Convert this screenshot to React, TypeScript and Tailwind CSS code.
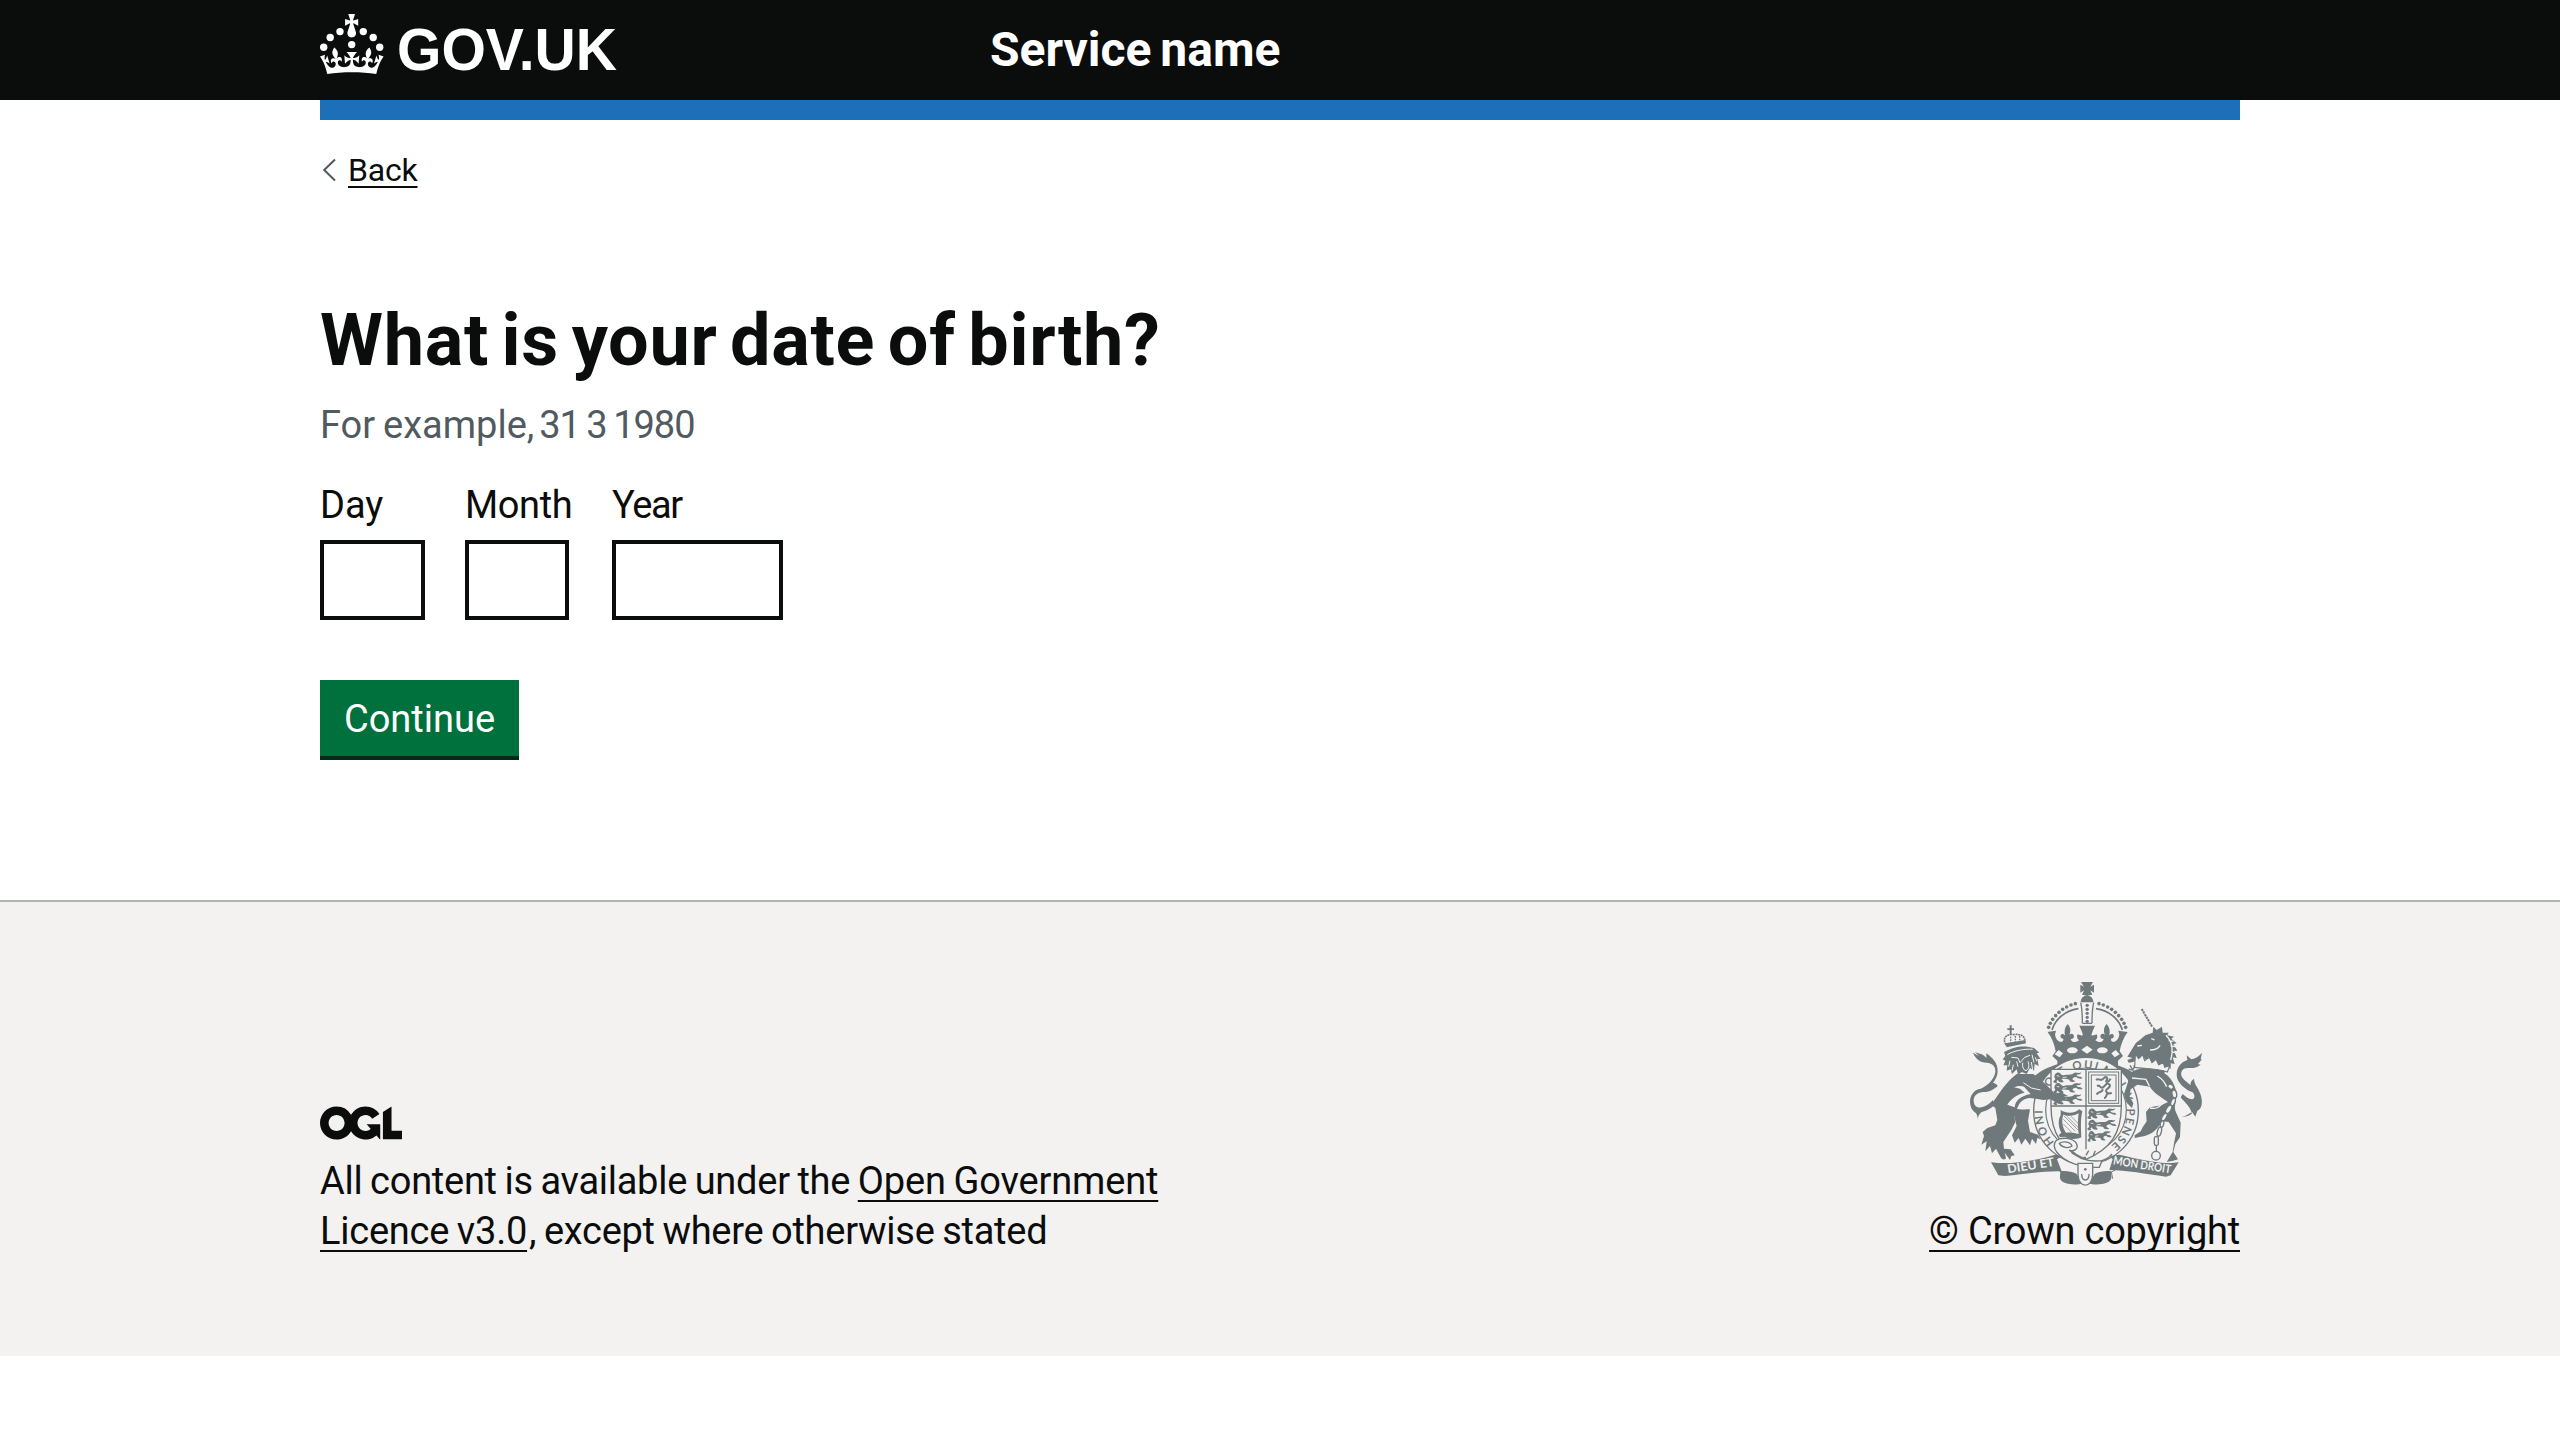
import type { ReactNode } from 'react';

function Crown() {
  return (
    <svg viewBox="0 0 64 60" className="mt-3.5 h-[60px] w-16 shrink-0 fill-current" aria-hidden="true">
      <circle cx="20" cy="17.6" r="3.7" />
      <circle cx="10.2" cy="23.5" r="3.7" />
      <circle cx="3.7" cy="33.2" r="3.7" />
      <circle cx="31.7" cy="30.6" r="3.7" />
      <circle cx="43.3" cy="17.6" r="3.7" />
      <circle cx="53.2" cy="23.5" r="3.7" />
      <circle cx="59.7" cy="33.2" r="3.7" />
      <path d="M33.1,9.8c.2-.1.3-.3.5-.5l4.6,2.4v-6.8l-4.6,1.5c-.1-.2-.3-.3-.5-.5l1.9-5.9h-6.7l1.9,5.9c-.2.1-.3.3-.5.5l-4.6-1.5v6.8l4.6-2.4c.1.2.3.3.5.5l-2.6,8c-.9,2.8,1.2,5.7,4.1,5.7h0c3,0,5.1-2.9,4.1-5.7l-2.6-8ZM37,37.9s-3.4,3.8-4.1,6.1c2.2,0,4.2-.5,6.4-2.8l-.7,8.5c-2-2.8-4.4-4.1-5.7-3.8.1,3.1.5,6.7,5.8,7.2,3.7.3,6.7-1.5,7-3.8.4-2.6-2-4.3-3.7-1.6-1.4-4.5,2.4-6.1,4.9-3.2-1.9-4.5-1.8-7.7,2.4-10.9,3,4,2.6,7.3-1.2,11.1,2.4-1.3,6.2,0,4,4.6-1.2-2.8-3.7-2.2-4.2.2-.3,1.7.7,3.7,3,4.2,1.9.3,4.7-.9,7-5.9-1.3,0-2.4.7-3.9,1.7l2.4-8c.6,2.3,1.4,3.7,2.2,4.5.6-1.6.5-2.8,0-5.3l5,1.8c-2.6,3.6-5.2,8.7-7.3,17.5-7.4-1.1-15.7-1.7-24.5-1.7h0c-8.8,0-17.1.6-24.5,1.7-2.1-8.9-4.7-13.9-7.3-17.5l5-1.8c-.5,2.5-.6,3.7,0,5.3.8-.8,1.6-2.3,2.2-4.5l2.4,8c-1.5-1-2.6-1.7-3.9-1.7,2.3,5,5.2,6.2,7,5.9,2.3-.4,3.3-2.4,3-4.2-.5-2.4-3-3.1-4.2-.2-2.2-4.6,1.6-6,4-4.6-3.7-3.7-4.2-7.1-1.2-11.1,4.2,3.2,4.3,6.4,2.4,10.9,2.5-2.8,6.3-1.3,4.9,3.2-1.8-2.7-4.1-1-3.7,1.6.3,2.3,3.3,4.1,7,3.8,5.4-.5,5.7-4.2,5.8-7.2-1.3-.2-3.7,1-5.7,3.8l-.7-8.5c2.2,2.3,4.2,2.7,6.4,2.8-.7-2.3-4.1-6.1-4.1-6.1h10.6,0Z" />
    </svg>
  );
}

function LicenceLogo() {
  return (
    <svg viewBox="0 0 483.2 195.7" className="mb-4 h-[34px] w-[82px] fill-current" aria-hidden="true">
      <path d="M421.5 142.8V.1l-50.7 32.3v161.1h112.4v-50.7zm-122.3-9.6A47.12 47.12 0 0 1 221 97.8c0-26 21.1-47.1 47.1-47.1 16.7 0 31.4 8.7 39.7 21.8l42.7-27.2A97.63 97.63 0 0 0 268.1 0c-36.5 0-68.3 20.1-85.1 49.7A98 98 0 0 0 97.8 0C43.9 0 0 43.9 0 97.8s43.9 97.8 97.8 97.8c36.5 0 68.3-20.1 85.1-49.7a97.76 97.76 0 0 0 149.6 25.4l19.4 22.2h3v-87.8h-80l24.3 27.5zM97.8 145c-26 0-47.1-21.1-47.1-47.1s21.1-47.1 47.1-47.1 47.1 21.1 47.1 47.1S123.8 145 97.8 145" />
    </svg>
  );
}

const INK = '#6f797c';
const PAPER = '#f3f2f1';

/* One walking lion of the English quarters. */
function Passant({ x, y }: { x: number; y: number }) {
  return (
    <g transform={`translate(${x} ${y})`}>
      <path d="M2 4c4-6 12-6 16-1 4 4 6 6 12 4 8-2 16 0 22-2 5-2 6-6 12-5 5 0 10 2 16-1-1 6-8 7-14 7-2 4 4 6 12 6l6 5c-8 3-16-1-20-4-8 1-12 4-10 8l8 5c-8 4-18 1-18-5-8-3-16-3-24-2 2 4 8 5 6 10-8 1-16-1-16-7-4 1-6 5-2 8-6 2-12 1-12-4 2-3 6-4 6-8-4-3-4-8 0-14z" />
      <path d="M6 9l8 2M24 15l12-2" stroke={PAPER} strokeWidth="2.5" fill="none" />
    </g>
  );
}

function CoatOfArms() {
  const beads = [[296, 172], [301, 160], [308, 148], [317, 137], [327, 127], [338, 118], [350, 111], [363, 105], [376, 101]];
  const motto: [string, number][] = [['HONI', 6], ['SOIT', 158], ['QUI', 272], ['MAL', 358], ['Y', 455], ['PENSE', 498]];
  return (
    <svg viewBox="30 36 750 612" className="mb-5 h-[204px] w-[250px]" fill={INK} aria-hidden="true">
      {/* crown */}
      <path d="M393 36h36l-8 14 11-6v24l-11-7 6 14h-31l6-14-11 7V44l11 6z" />
      <path d="M411 75c12 2 19 11 19 22h-38c0-11 7-20 19-22z" />
      <g>
        {beads.map(([x, y]) => (
          <g key={x}>
            <circle cx={x} cy={y} r="5.4" />
            <circle cx={823 - x} cy={y} r="5.4" />
          </g>
        ))}
        {[106, 118, 130, 142, 154].map((y) => <circle key={y} cx="411.5" cy={y} r="5" />)}
      </g>
      <g fill="none" stroke={INK} strokeWidth="5">
        <path d="M306 180c10-34 40-58 79-64M517 180c-10-34-40-58-79-64" />
        <path d="M392 98c5 20 5 40 5 62M431 98c-5 20-5 40-5 62M397 160h29" strokeWidth="4" />
      </g>
      <path d="M290 186l28-4-3 12c2 12 8 20 18 22 6-1 8-6 7-10-8 0-11-7-6-13 4-3 9 0 11 3-3-13-1-24 8-34 9 10 10 20 5 33 5-7 14-4 14 4 0 6-5 9-10 8 2 10 14 13 25 4-6-4-8-12-4-18 5 3 11 4 16 3-2-9-6-18-11-29h47c-5 11-9 20-11 29 5 1 11 0 16-3 4 6 2 14-4 18 11 9 23 6 25-4-5 1-10-2-10-8 0-8 9-11 14-4-5-13-4-23 5-33 9 10 11 21 8 34 2-3 7-6 11-3 5 6 2 13-6 13-1 4 1 9 7 10 10-2 16-10 18-22l-3-12 28 4c-13 18-20 36-24 58l10 14-15 14v20c-55-24-128-24-182 0v-20l-15-14 10-14c-4-22-11-40-24-58z" />
      <g fill={PAPER}>
        <ellipse cx="367" cy="241" rx="16" ry="9" />
        <ellipse cx="457" cy="241" rx="16" ry="9" />
        <path d="M411 227l17 12-17 12-17-12zM326 240l13 10-10 12-15-9zM497 240l-13 10 10 12 15-9z" />
      </g>

      {/* garter */}
      <path d="M250 322c16-16 40-30 82-42l-14 30-50 50zM566 322c-16-16-40-30-82-42l22 40 44 36z" />
      <ellipse cx="408" cy="422" rx="157" ry="160" fill={PAPER} stroke={INK} strokeWidth="4" />
      <ellipse cx="408" cy="420" rx="121" ry="126" fill="none" stroke={INK} strokeWidth="3.5" />
      <path id="garter-line" d="M318 521A126 130 0 1 1 462 541" fill="none" />
      <text fontFamily="Lato, sans-serif" fontWeight="700" fontSize="34" letterSpacing="5">
        {motto.map(([word, offset]) => (
          <textPath key={word} href="#garter-line" startOffset={offset}>{word}</textPath>
        ))}
      </text>

      {/* shield */}
      <path d="M303 298h211v110c0 84-34 130-106 160-72-30-105-76-105-160z" fill={PAPER} stroke={INK} strokeWidth="4" />
      <path d="M408 298v240M303 408h211" stroke={INK} strokeWidth="4" />
      <Passant x={314} y={308} />
      <Passant x={314} y={340} />
      <Passant x={314} y={374} />
      <Passant x={416} y={416} />
      <Passant x={416} y={450} />
      <g transform="translate(416 484) scale(.82 1)"><Passant x={0} y={0} /></g>
      <g fill="none" stroke={INK}>
        <rect x="416" y="306" width="90" height="94" strokeWidth="3" />
        <rect x="424" y="315" width="74" height="77" strokeWidth="3" />
        <path d="M438 330c10-8 14 8 24-6 6-6 14 0 8 6-6 8 6 8 12-4M441 348c12-6 8 10 18 4s10-18 20-8c4 8-6 10-10 16s8 14 16 8M440 374c4-12 18-4 18-16M462 384c10 0 4-14 14-14" strokeWidth="6" />
      </g>
      <path d="M332 420c20 14 46 8 56-2l9 6c-6 22-4 54-3 78-14 8-36 6-50-2l-14 2-4-6 8-8c-10-16-10-40-2-52z" />
      <path d="M340 434c16 6 34 4 46-4-3 22-3 44 0 62-12-4-26-6-38-4-12-18-14-38-8-54z" fill={PAPER} />
      <path d="M340 448l36 36M342 438l44 44M350 438l34 34M362 438l22 22M340 462l24 24" stroke={INK} strokeWidth="2" />

      {/* garter buckle and strap */}
      <path d="M318 512c16-12 48-8 60 6 10 18-4 28-20 22 24 26 60 36 98 32l-8 20c-54 2-104-14-128-46-8-12-10-24-2-34z" fill={PAPER} stroke={INK} strokeWidth="4" />
      <path d="M328 520c12-8 34-4 38 8-10 8-30 6-38-8z" fill={PAPER} stroke={INK} strokeWidth="4" />
      <circle cx="369" cy="548" r="4.5" />
      <circle cx="404" cy="564" r="4.5" />
      <path d="M456 572c14-4 24-12 30-20M408 556l8-14M430 556l6-14" fill="none" stroke={INK} strokeWidth="4" />
      <path d="M330 604c16-2 36 0 50 8 6 10 14 20 26 26-26 10-74 6-76-14-1-8 2-14 0-20zM484 604c-16-2-36 0-50 8-6 10-14 20-26 26 26 10 74 6 76-14 1-8-2-14 0-20z" />
      <path d="M384 580h44v34c-2 42-42 42-44 0z" fill={PAPER} stroke={INK} strokeWidth="4" />
      <path d="M395 612c0 24 22 24 22 0" fill="none" stroke={INK} strokeWidth="4" />
      <circle cx="406" cy="598" r="4" />

      {/* motto ribbon */}
      <path d="M123 577l22 2c60 2 112-8 170-25l22 4-16 10 14 36c-50-2-100 8-170 14l-20-2z" />
      <path d="M686 577l-22 2c-50 0-100-12-156-25l-28 4 8 10-10 32c50 0 110 12 170 20l14-4z" />
      <path d="M318 600l24 6-8 20M496 600l-12 6 4 20" fill="none" stroke={INK} strokeWidth="3" />
      <g fill={PAPER} fontFamily="Lato, sans-serif" fontWeight="700" fontSize="36">
        <text x="174" y="610" textLength="142" lengthAdjust="spacingAndGlyphs" transform="rotate(-9 174 610)">DIEU ET</text>
        <text x="488" y="583" textLength="175" lengthAdjust="spacingAndGlyphs" fontSize="35" transform="rotate(9 488 583)">MON DROIT</text>
      </g>

      {/* lion */}
      <path d="M82 452c2-10 0-16-4-22-12-8-18-20-18-34 0-22 14-38 32-40 20-8 40-26 44-50 2-16-8-26-26-28-20 0-34-12-41-30l18 10-12-12c14 6 26 6 34 18l0-14c20 14 34 30 34 52 0 14-6 26-14 36 6 2 12 4 14 10-12 10-26 20-44 18-20 2-28 14-28 26 0 16 12 22 24 20 14-4 22-10 34-22l6 14c-14 12-26 18-40 22-8 6-12 16-13 26z" />
      <path d="M200 312c-30 22-48 52-76 92l12 10 6 36-6 16-24 8-14 12 4 12-8 26 16-10-4 30 14-16 6 22 12-14 14 26c4 8 14 8 16 2l-4-16 16 22 4-12 10-2-12-18-20-2-2-20 24-36 12-24-4-22 10-20c8-18 14-26 36-30l20 2 22 4 22-2 24 14 6-12 18 2-8-12 12-2-18-10-22 2-30-30-34-28z" />
      <path d="M190 414c20 6 38 4 50 4l-6 34 6 34 24 8 8 14-10-4-4 18-12-16-6 20-14-20-12 18-8-20-12 14-8-22 14-28-10-38z" />
      <path d="M172 404c10-16 26-30 52-36l-14-12-18-4c14-6 24-4 30-2l20 22c-30 6-46 18-48 40z" fill={PAPER} />
      <path d="M162 246c18-10 30-14 44-16 18-2 32 0 46 4l16 14-8 2 12 18-10-2 4 22-12-6-2 20-12-8-10 18-14-6-12 8-4-16-14 14-4-14-12 4 2-16-12 0 6-14-8-4 8-10z" />
      <g fill="none" stroke={PAPER} strokeWidth="3">
        <path d="M172 254c20-12 50-18 76-16M184 262l20 2 6 14 14-16 16-6M200 274l4 16M218 278c-2 12 2 22 10 24 10-4 10-16 6-28M180 272l-4 18M190 284l-4 18M246 254l6 24M256 262l4 12M244 276l4 24M220 338l24 16 28 6M214 352l20 14" />
      </g>
      <path d="M168 224c-12-18 0-34 24-30 22-4 38 8 30 24z" fill={PAPER} stroke={INK} strokeWidth="5" strokeDasharray="6 2" />
      <path d="M182 200v18M196 198v18M209 198v14" stroke={INK} strokeWidth="4" strokeDasharray="5 3" />
      <path d="M166 220l60-10 2 10-58 12zM179 166h6v9h7v5h-7v14h-6v-14h-7v-5h7z" />

      {/* unicorn */}
      <path d="M575 117l32 54" stroke={INK} strokeWidth="6" strokeDasharray="7 2" />
      <path d="M558 218c10-6 18-14 28-22l22-8 2-18 10 10 16-10 2 18 18 0-4 8 20 4-8 6 16 14-10 2 12 20-10 0 8 22-12-2 6 20-12-2 0 16-10-2-14 24-24-14-48-10 22-26c-16-10-30 0-38 8l-14 2-4-8 16-6-16-4z" />
      <path d="M604 206l10 4M600 240c14 0 26-6 30-14M648 196c20 20 22 46 14 74M656 212l14 2M662 228l16 2M664 246l14 2M562 228l14-2" fill="none" stroke={PAPER} strokeWidth="4" />
      <path d="M556 252l10 14 12-12 6 18 14-10 8 16 12-10 8 16 14-6 4 14 16-6-8 20c-30-10-66-10-98-14z" fill={PAPER} stroke={INK} strokeWidth="3.5" />
      <path d="M536 296c8 8 20 0 16-10M540 286l14 24" fill="none" stroke={INK} strokeWidth="4" />
      <path d="M544 308c16-16 54-16 86-4 24 8 42 28 50 66 0 22-8 34-4 52l16 36-2 44-14 20-6 24 14 22-14 4-20 4 18-30 4-26 6-30-22-34-20-2c-16 30-38 44-64 46l-18 4 0-8 18-12 6-12 12-18-2-28 12-14 34-6 20-10c-24-16-48-32-54-46l-38-6-20 14-4 20 12 22-4 14-16-16-8-26 12-36c0-8 4-18 14-22z" />
      <path d="M546 324l42 4 10 20M600 414c18 4 26-2 36-12M622 318c16 10 20 16 28 32" fill="none" stroke={PAPER} strokeWidth="4" />
      <path d="M692 440c14 2 28-2 34-10-8-24-22-32-34-48l6-10c10 8 18 16 28 16 10-2 10-16 0-22-20-8-46-28-46-52 0-22 14-38 32-44l-2-14 14 12c14-2 24-10 32-20l-4 20 4 0-12 14 8 2c-12 10-24 10-38 10-16 0-22 10-20 22 4 14 18 20 28 30-2-8 2-14 10-20 0 18 14 28 20 48 8 24 2 44-10 48l-6 18-10-14c-10 6-24 16-34 14z" />
      <g fill={PAPER} stroke={INK} strokeWidth="4">
        <ellipse cx="662" cy="350" rx="9" ry="7" transform="rotate(30 662 350)" />
        <ellipse cx="673" cy="372" rx="7" ry="12" transform="rotate(-10 673 372)" />
        <ellipse cx="669" cy="396" rx="6" ry="12" transform="rotate(20 669 396)" />
        <ellipse cx="656" cy="418" rx="7" ry="14" transform="rotate(30 656 418)" />
        <ellipse cx="643" cy="441" rx="6" ry="13" transform="rotate(30 643 441)" />
        <ellipse cx="636" cy="462" rx="5" ry="10" transform="rotate(14 636 462)" />
        <ellipse cx="628" cy="485" rx="6" ry="14" transform="rotate(14 628 485)" />
        <rect x="613" y="500" width="12" height="26" rx="5" />
        <path d="M619 526v18" />
        <circle cx="618" cy="557" r="13" />
      </g>
    </svg>
  );
}

function Link({ children, className = '' }: { children: ReactNode; className?: string }) {
  return (
    <a href="#" className={`underline decoration-2 underline-offset-[6px] [text-decoration-skip-ink:none] ${className}`}>
      {children}
    </a>
  );
}

function DateField({ label, itemClass, labelClass = '', inputClass }: { label: string; itemClass: string; labelClass?: string; inputClass: string }) {
  return (
    <label className={`flex flex-col gap-2.5 ${itemClass}`}>
      <span className={labelClass}>{label}</span>
      <input type="text" inputMode="numeric" className={`h-20 rounded-none border-4 border-[#0b0c0c] bg-white px-1.5 ${inputClass}`} />
    </label>
  );
}

export default function App() {
  return (
    <div className="min-h-[1438px] bg-white font-['Roboto',sans-serif] text-[38px] leading-[50px] text-[#0b0c0c]">
      <header className="bg-[#0b0c0c] text-white">
        <div className="mx-auto flex h-[100px] w-[1920px]">
          <a href="#" className="flex w-[670px]">
            <Crown />
            <span className="ml-[13px] mt-5 origin-left scale-x-[0.968] self-start font-['Liberation_Sans',sans-serif] text-[59px] font-bold leading-[60px]">
              GOV.UK
            </span>
          </a>
          <a href="#" className="mt-5 self-start text-5xl font-bold leading-[60px] [word-spacing:-3px]">
            Service name
          </a>
        </div>
      </header>

      <div className="mx-auto h-[780px] w-[1920px] border-t-[20px] border-[#1d70b8] [box-sizing:content-box]">
        <a href="#" className="mt-[30px] flex w-fit items-center text-[32px] leading-10">
          <svg viewBox="0 0 28 40" className="h-10 w-7 fill-none stroke-[#505a5f] stroke-2" aria-hidden="true">
            <path d="M15 9.5L4.2 20 15 30.5" />
          </svg>
          <span className="tracking-[-0.2px] underline decoration-2 underline-offset-[5px] [text-decoration-skip-ink:none]">Back</span>
        </a>

        <main className="pt-[111px]">
          <h1 className="mb-[19px] text-[72px] font-bold leading-[80px] tracking-[0.7px] [word-spacing:-6px]">What is your date of birth?</h1>
          <p className="mb-[30px] text-[#505a5f]">
            <span className="[word-spacing:-1.5px]">For example, </span>
            <span className="ml-[-3px] tracking-[-1px] [word-spacing:-2px]">31 3 1980</span>
          </p>
          <div className="flex">
            <DateField label="Day" itemClass="mr-10 w-[105px]" inputClass="w-[105px]" />
            <DateField label="Month" itemClass="mr-10 w-[107px]" labelClass="tracking-[-0.4px]" inputClass="w-[104px]" />
            <DateField label="Year" itemClass="w-[171px]" labelClass="tracking-[-1.4px]" inputClass="w-[171px]" />
          </div>
          <button type="button" className="mt-[60px] h-20 w-[199px] border-b-4 border-[#002d18] bg-[#00703c] pt-0.5 leading-[38px] text-white">
            Continue
          </button>
        </main>
      </div>

      <footer className="h-[456px] border-t-2 border-[#b1b4b6] bg-[#f3f2f1] pt-20">
        <div className="mx-auto flex w-[1920px] items-end justify-between">
          <div>
            <LicenceLogo />
            <p className="tracking-[-0.27px] [word-spacing:-1.5px]">
              All content is available under the <Link className="tracking-[-0.16px]">Open Government<br />
              <span className="tracking-[-0.23px]">Licence v3.0</span></Link><span className="ml-0.5">, except where otherwise stated</span>
            </p>
          </div>
          <div className="flex flex-col items-end">
            <div className="flex w-[310px] justify-center"><CoatOfArms /></div>
            <Link className="tracking-[-0.22px]">© Crown copyright</Link>
          </div>
        </div>
      </footer>
    </div>
  );
}
